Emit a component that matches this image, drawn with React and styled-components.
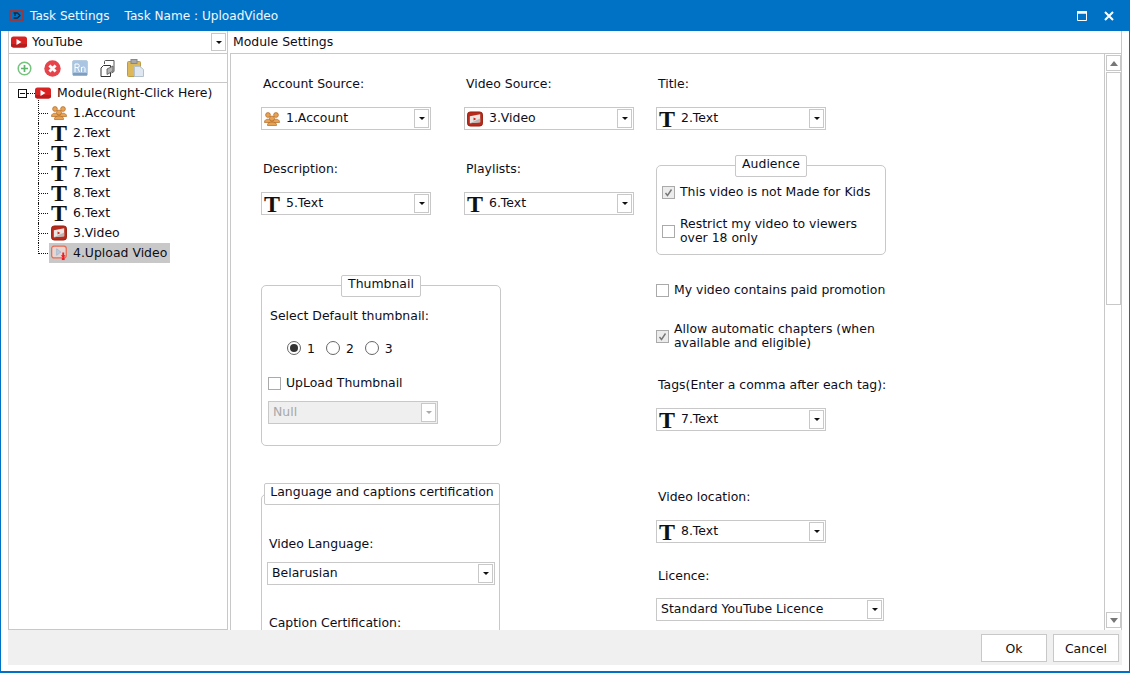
import React from 'react'
import styled, {createGlobalStyle} from 'styled-components'

const GlobalStyle = createGlobalStyle`
    html, body {
        margin: 0;
        padding: 0;
        background: #fff;
    }
    * {
        box-sizing: border-box;
    }
`

const LINE = '#c8c8c8'

const YouTubeIcon = () => (
    <svg width="16" height="12" viewBox="0 0 16 12">
        <rect x="0" y="0.5" width="16" height="11" rx="2.5" fill="#d92222"/>
        <path d="M0 8 H16 V9 C16 10.5 15 11.5 13.5 11.5 H2.5 C1 11.5 0 10.5 0 9 Z" fill="#b81c1c"/>
        <path d="M5.5 3 L10.5 6 L5.5 9 Z" fill="#fff"/>
    </svg>
)

const AccountIcon = () => (
    <svg width="16" height="14" viewBox="0 0 16 14">
        <g fill="#e8a253" stroke="#b06a24" strokeWidth="0.7">
            <circle cx="4" cy="3" r="2.4"/>
            <circle cx="12" cy="3" r="2.4"/>
            <path d="M0.5 10 C0.5 6.2 7.5 6.2 7.5 10 L7.5 10.5 L0.5 10.5 Z"/>
            <path d="M8.5 10 C8.5 6.2 15.5 6.2 15.5 10 L15.5 10.5 L8.5 10.5 Z"/>
            <circle cx="8" cy="6.5" r="2.5"/>
            <path d="M3.5 13.5 L3.5 12.5 C3.5 9.2 12.5 9.2 12.5 12.5 L12.5 13.5 Z"/>
        </g>
    </svg>
)

const VideoIcon = () => (
    <svg width="17" height="16" viewBox="0 0 17 16">
        <rect x="0.5" y="0.5" width="16" height="15" rx="3" fill="#b82a1c" stroke="#97200f"/>
        <path d="M3 5 L14 3 L14 11.5 L3 12.5 Z" fill="#eae6e4"/>
        <path d="M3 12.5 L14 7.5 L14 11.5 Z" fill="#bdb6b4"/>
        <path d="M7 6.5 L10 8 L7 9.5 Z" fill="#d02018"/>
    </svg>
)

const UploadIcon = () => (
    <svg width="17" height="16" viewBox="0 0 17 16">
        <rect x="0.7" y="0.7" width="15.5" height="12.5" rx="2.5" fill="#e6d6d2" stroke="#ec6a50" strokeWidth="1.3"/>
        <path d="M6 3.5 L10.5 7 L6 10.5 Z" fill="#b9cbe0" stroke="#8fa9c9" strokeWidth="0.6"/>
        <path d="M12 7.5 L14 7.5 L14 10.5 L15.5 10.5 L13 13.5 L10.5 10.5 L12 10.5 Z" fill="#ee1c25"/>
        <rect x="11.5" y="13" width="3" height="2.5" fill="#ee1c25"/>
    </svg>
)

const AddIcon = () => (
    <svg width="15" height="15" viewBox="0 0 15 15">
        <circle cx="7.5" cy="7.5" r="6.3" fill="#fff" stroke="#74c47e" strokeWidth="1.5"/>
        <path d="M7.5 4 V11 M4 7.5 H11" stroke="#5cb56a" strokeWidth="1.7"/>
    </svg>
)

const RemoveIcon = () => (
    <svg width="17" height="17" viewBox="0 0 17 17">
        <circle cx="8.5" cy="8.5" r="8.2" fill="#e6444a"/>
        <path d="M5.4 5.4 L11.6 11.6 M11.6 5.4 L5.4 11.6" stroke="#fff" strokeWidth="2.8"/>
    </svg>
)

const RenameIcon = () => (
    <svg width="16" height="16" viewBox="0 0 16 16">
        <rect x="0.5" y="0.5" width="15" height="15" rx="1.5" fill="#a9c5e2" stroke="#b9cde0"/>
        <rect x="1" y="13" width="14" height="2.5" fill="#7f9dbd"/>
        <path d="M3 12 V4 H6 C7.7 4 7.7 7.5 6 7.5 H3 M5.5 7.5 L7.5 12 M9.5 12 V7 M9.5 8.5 C10.5 6.5 13 6.5 13 8.5 V12" fill="none" stroke="#fff" strokeWidth="1"/>
    </svg>
)

const CopyIcon = () => (
    <svg width="15" height="17" viewBox="0 0 15 17">
        <path d="M4.5 4 V1.5 C4.5 1 5 0.5 5.5 0.5 H14 V11.5 L11.5 13" fill="#fff" stroke="#555" strokeWidth="1"/>
        <path d="M3.5 5.5 H10.5 V16.5 H1 V8 Z" fill="#fff" stroke="#333" strokeWidth="1"/>
        <path d="M7 9 L13 6 V11 L7 14.5 Z" fill="#b4b4b4" stroke="#555" strokeWidth="0.8"/>
    </svg>
)

const PasteIcon = () => (
    <svg width="17" height="18" viewBox="0 0 17 18">
        <rect x="0.5" y="2.5" width="13" height="15" rx="1" fill="#dcb85a" stroke="#bd9a48"/>
        <rect x="4" y="0.5" width="6" height="4" fill="#a8a8a8" stroke="#888"/>
        <path d="M7.5 7.5 H13 L16.5 10.5 V17.5 H7.5 Z" fill="#dfe8f0" stroke="#b4c2cf"/>
    </svg>
)

const TitleIcon = () => (
    <svg width="15" height="11" viewBox="0 0 15 11">
        <rect x="1" y="1" width="13" height="9" fill="none" stroke="#b0302a" strokeWidth="1.6"/>
        <path d="M4.5 3 L8.5 3 L11 5.5 L8.5 8 L4.5 8 M6 3 V6" fill="none" stroke="#12283f" strokeWidth="1.3"/>
    </svg>
)

const Window = styled.div`
    width: 1130px;
    height: 673px;
    display: flex;
    flex-direction: column;
    overflow: hidden;
    background: #fff;
    border: solid #0072c6;
    border-width: 0 1px 2px 1px;
    font-family: "DejaVu Sans", sans-serif;
    font-size: 12.45px;
    color: #0d0d1a;
`

const TitleBar = styled.header`
    height: 31px;
    flex: none;
    margin: 0 -1px;
    padding: 0 16px 0 9px;
    display: flex;
    align-items: center;
    font-size: 12.1px;
    background: #0072c6;
    color: #f2f7fc;
`

const TitleText = styled.span`
    margin-left: ${p => p.$gap}px;
`

const WindowButtons = styled.div`
    margin-left: auto;
    display: flex;
    align-items: center;
    gap: 17px;
`

const Main = styled.main`
    flex: none;
    height: 599px;
    margin-left: 7px;
    display: flex;
`

const Sidebar = styled.aside`
    width: 220px;
    flex: none;
    display: flex;
    flex-direction: column;
    border: 1px solid ${LINE};
    border-top: 0;
`

const ModuleSelect = styled.div`
    height: 23px;
    flex: none;
    padding: 0 1px 0 2px;
    display: flex;
    align-items: center;
    gap: 5px;
    border-bottom: 1px solid ${LINE};
`

const ArrowButton = styled.span`
    width: 15px;
    height: ${p => p.$height || 19}px;
    margin-left: auto;
    flex: none;
    display: flex;
    align-items: center;
    justify-content: center;
    background: #fff;
    border: 1px solid ${LINE};

    &::after {
        content: '';
        border: solid transparent;
        border-width: 3px 3px 0;
        border-top-color: ${p => (p.$disabled ? '#aaa' : '#111')};
    }
`

const Toolbar = styled.div`
    height: 29px;
    flex: none;
    padding-left: 1.5px;
    display: flex;
    align-items: center;
    border-bottom: 1px solid ${LINE};
`

const ToolButton = styled.span`
    width: 27.75px;
    display: flex;
    justify-content: center;
`

const Tree = styled.div`
    padding: 0 0 0 9px;
`

const RootRow = styled.div`
    height: 20px;
    display: flex;
    align-items: center;
`

const Expander = styled.span`
    width: 9px;
    height: 9px;
    flex: none;
    display: flex;
    align-items: center;
    justify-content: center;
    border: 1px solid #111;

    &::after {
        content: '';
        width: 5px;
        height: 1px;
        background: #111;
    }
`

const RootDots = styled.span`
    width: 8px;
    flex: none;
    border-top: 1px dotted #111;
`

const RaisedText = styled.span`
    margin-bottom: 2px;
    margin-left: ${p => p.$left || 0}px;
`

const TreeRow = styled.div`
    position: relative;
    height: 20px;
    margin-left: 20px;
    padding-left: 11px;
    display: flex;
    align-items: center;

    &::before {
        content: '';
        position: absolute;
        left: 0;
        top: ${p => (p.$first ? -3 : 0)}px;
        bottom: ${p => (p.$last ? 9 : 0)}px;
        border-left: 1px dotted #111;
    }

    &::after {
        content: '';
        position: absolute;
        left: 1px;
        width: 9px;
        top: 10px;
        border-top: 1px dotted #111;
    }
`

const TreeItem = styled.span`
    height: 20px;
    display: flex;
    align-items: center;
    padding: 0 3px 0 2px;
    background: ${p => (p.$selected ? LINE : 'transparent')};
`

const ItemIcon = styled.span`
    width: 16px;
    margin-right: 6px;
    flex: none;
    display: flex;
    align-items: center;
    justify-content: center;
`

const TextGlyph = styled.span`
    font-family: "Liberation Serif", serif;
    font-weight: 700;
    font-size: 24px;
    line-height: 18px;
    color: #111;
`

const Settings = styled.section`
    flex: none;
    width: 892px;
    margin-left: 2px;
    display: flex;
    flex-direction: column;
    border-right: 1px solid ${LINE};
`

const SettingsHeader = styled.div`
    height: 22px;
    flex: none;
    margin-left: 3px;
    display: flex;
    align-items: center;
`

const SettingsBody = styled.div`
    flex: 1;
    min-height: 0;
    display: flex;
    overflow: hidden;
    border-top: 1px solid ${LINE};
    border-left: 1px solid ${LINE};
`

const Canvas = styled.div`
    flex: 1;
    min-width: 0;
    padding: 22px 0 0 30px;
    display: flex;
    overflow: hidden;
`

const LeftColumn = styled.div`
    width: 395px;
    flex: none;
`

const RightColumn = styled.div`
    width: 240px;
    flex: none;
`

const FieldRow = styled.div`
    display: flex;
    gap: 33px;
    margin-bottom: ${p => p.$after || 0}px;
`

const Label = styled.div`
    height: 16px;
    line-height: 16px;
    padding-left: 2px;
    margin-top: ${p => p.$top || 0}px;
    margin-bottom: ${p => p.$bottom ?? 15}px;
    white-space: nowrap;
`

const ComboBox = styled.div`
    width: ${p => p.$width || 170}px;
    height: 23px;
    padding: 0 1px 0 ${p => (p.$plain ? 4 : 2)}px;
    display: flex;
    align-items: center;
    background: ${p => (p.$disabled ? '#efefef' : '#fff')};
    color: ${p => (p.$disabled ? '#a8a8a8' : 'inherit')};
    border: 1px solid ${LINE};
`

const Combo = ({width, icon, value, disabled}) => (
    <ComboBox $width={width} $disabled={disabled} $plain={!icon}>
        {icon && <ItemIcon>{icon}</ItemIcon>}
        <RaisedText>{value}</RaisedText>
        <ArrowButton $disabled={disabled}/>
    </ComboBox>
)

const Group = styled.div`
    position: relative;
    width: ${p => p.$width}px;
    height: ${p => p.$height}px;
    margin-top: ${p => p.$top}px;
    padding: ${p => p.$padding};
    border: 1px solid ${LINE};
    border-radius: 5px;
`

const Legend = styled.div`
    position: absolute;
    top: ${p => p.$top || -11}px;
    left: ${p => p.$left}px;
    width: ${p => p.$width}px;
    height: 22px;
    line-height: 16px;
    text-align: center;
    white-space: nowrap;
    background: #fff;
    border: 1px solid ${LINE};
    border-radius: 2px;
`

const RadioRow = styled.div`
    height: 16px;
    margin: 16px 0 0 19px;
    display: flex;
    align-items: center;
    gap: 6px;
`

const Radio = styled.span`
    width: 14px;
    height: 14px;
    flex: none;
    display: flex;
    align-items: center;
    justify-content: center;
    border: 1px solid #666;
    border-radius: 50%;
    background: #fff;
    margin-left: ${p => (p.$first ? 0 : 5)}px;

    &::after {
        content: '';
        width: 8px;
        height: 8px;
        border-radius: 50%;
        background: ${p => (p.$checked ? '#333' : 'transparent')};
    }
`

const CheckRow = styled.div`
    display: flex;
    align-items: center;
    gap: 5px;
    line-height: 14px;
    min-height: 16px;
    margin-top: ${p => p.$top || 0}px;
    margin-bottom: ${p => p.$bottom || 0}px;
`

const CheckBox = styled.span`
    width: 13px;
    height: 13px;
    flex: none;
    display: flex;
    align-items: center;
    justify-content: center;
    background: ${p => (p.$checked ? '#ececec' : '#fff')};
    border: 1px solid #aaa;
`

const Check = () => (
    <svg width="9" height="9" viewBox="0 0 9 9">
        <path d="M1.5 5 L3.5 7.5 L7.5 1.5" fill="none" stroke="#777" strokeWidth="1.4"/>
    </svg>
)

const Scrollbar = styled.div`
    width: 17px;
    flex: none;
    padding: 1px 0 2px 1px;
    display: flex;
    flex-direction: column;
    gap: 1px;
    border-left: 1px solid ${LINE};
`

const ScrollButton = styled.span`
    width: 15px;
    height: 16px;
    flex: none;
    display: flex;
    align-items: center;
    justify-content: center;
    border: 1px solid ${LINE};

    &::after {
        content: '';
        border: solid transparent;
        border-width: ${p => (p.$up ? '0 4px 5px' : '5px 4px 0')};
        border-bottom-color: ${p => (p.$up ? '#777' : 'transparent')};
        border-top-color: ${p => (p.$up ? 'transparent' : '#777')};
    }
`

const ScrollThumb = styled.span`
    width: 15px;
    height: 233px;
    flex: none;
    border: 1px solid ${LINE};
`

const ScrollSpace = styled.span`
    flex: 1;
`

const Footer = styled.footer`
    flex: none;
    width: 1114px;
    height: 35px;
    margin-left: 7px;
    padding: 4px 3px 3px 0;
    display: flex;
    justify-content: flex-end;
    gap: 6px;
    background: #f0f0f0;
`

const Button = styled.button`
    width: 66px;
    height: 28px;
    padding: 0;
    font: inherit;
    color: inherit;
    background: #fff;
    border: 1px solid ${LINE};
`

const TIcon = <TextGlyph>T</TextGlyph>

const treeItems = [
    {label: '1.Account', icon: <AccountIcon/>},
    {label: '2.Text', icon: TIcon},
    {label: '5.Text', icon: TIcon},
    {label: '7.Text', icon: TIcon},
    {label: '8.Text', icon: TIcon},
    {label: '6.Text', icon: TIcon},
    {label: '3.Video', icon: <VideoIcon/>},
    {label: '4.Upload Video', icon: <UploadIcon/>, selected: true}
]

export default function App() {
    return (
        <Window>
            <GlobalStyle/>
            <TitleBar>
                <TitleIcon/>
                <TitleText $gap={6}>Task Settings</TitleText>
                <TitleText $gap={15}>Task Name : UploadVideo</TitleText>
                <WindowButtons>
                    <svg width="10" height="10" viewBox="0 0 10 10">
                        <path d="M0.5 2 H9.5 V9.5 H0.5 Z" fill="none" stroke="#fff"/>
                        <rect width="10" height="2.5" fill="#fff"/>
                    </svg>
                    <svg width="10" height="10" viewBox="0 0 10 10">
                        <path d="M1 1 L9 9 M9 1 L1 9" stroke="#fff" strokeWidth="2"/>
                    </svg>
                </WindowButtons>
            </TitleBar>

            <Main>
                <Sidebar>
                    <ModuleSelect>
                        <YouTubeIcon/>
                        <RaisedText>YouTube</RaisedText>
                        <ArrowButton $height={18}/>
                    </ModuleSelect>
                    <Toolbar>
                        <ToolButton><AddIcon/></ToolButton>
                        <ToolButton><RemoveIcon/></ToolButton>
                        <ToolButton><RenameIcon/></ToolButton>
                        <ToolButton><CopyIcon/></ToolButton>
                        <ToolButton><PasteIcon/></ToolButton>
                    </Toolbar>
                    <Tree>
                        <RootRow>
                            <Expander/>
                            <RootDots/>
                            <YouTubeIcon/>
                            <RaisedText $left={6}>Module(Right-Click Here)</RaisedText>
                        </RootRow>
                        {treeItems.map((item, i) => (
                            <TreeRow key={item.label} $first={i === 0} $last={i === treeItems.length - 1}>
                                <TreeItem $selected={item.selected}>
                                    <ItemIcon>{item.icon}</ItemIcon>
                                    <RaisedText>{item.label}</RaisedText>
                                </TreeItem>
                            </TreeRow>
                        ))}
                    </Tree>
                </Sidebar>

                <Settings>
                    <SettingsHeader><RaisedText>Module Settings</RaisedText></SettingsHeader>
                    <SettingsBody>
                        <Canvas>
                            <LeftColumn>
                                <FieldRow $after={31}>
                                    <div>
                                        <Label>Account Source:</Label>
                                        <Combo icon={<AccountIcon/>} value="1.Account"/>
                                    </div>
                                    <div>
                                        <Label>Video Source:</Label>
                                        <Combo icon={<VideoIcon/>} value="3.Video"/>
                                    </div>
                                </FieldRow>
                                <FieldRow>
                                    <div>
                                        <Label>Description:</Label>
                                        <Combo icon={TIcon} value="5.Text"/>
                                    </div>
                                    <div>
                                        <Label>Playlists:</Label>
                                        <Combo icon={TIcon} value="6.Text"/>
                                    </div>
                                </FieldRow>

                                <Group $width={240} $height={161} $top={70} $padding="22px 0 0 6px">
                                    <Legend $left={79} $width={80}>Thumbnail</Legend>
                                    <Label $bottom={0}>Select Default thumbnail:</Label>
                                    <RadioRow>
                                        <Radio $first $checked/>1
                                        <Radio/>2
                                        <Radio/>3
                                    </RadioRow>
                                    <CheckRow $top={19} $bottom={10}>
                                        <CheckBox/>
                                        UpLoad Thumbnail
                                    </CheckRow>
                                    <Combo value="Null" disabled/>
                                </Group>

                                <Group $width={239} $height={300} $top={48} $padding="41px 0 0 5px">
                                    <Legend $top={-12} $left={2} $width={236}>Language and captions certification</Legend>
                                    <Label $bottom={10}>Video Language:</Label>
                                    <Combo width={228} value="Belarusian"/>
                                    <Label $top={30}>Caption Certification:</Label>
                                </Group>
                            </LeftColumn>

                            <RightColumn>
                                <Label>Title:</Label>
                                <Combo icon={TIcon} value="2.Text"/>

                                <Group $width={230} $height={90} $top={35} $padding="18px 0 0 5px">
                                    <Legend $left={78} $width={72}>Audience</Legend>
                                    <CheckRow $bottom={17}>
                                        <CheckBox $checked><Check/></CheckBox>
                                        This video is not Made for Kids
                                    </CheckRow>
                                    <CheckRow>
                                        <CheckBox/>
                                        <span>Restrict my video to viewers<br/>over 18 only</span>
                                    </CheckRow>
                                </Group>

                                <CheckRow $top={27}>
                                    <CheckBox/>
                                    My video contains paid promotion
                                </CheckRow>
                                <CheckRow $top={24}>
                                    <CheckBox $checked><Check/></CheckBox>
                                    <span>Allow automatic chapters (when<br/>available and eligible)</span>
                                </CheckRow>

                                <Label $top={27}>Tags(Enter a comma after each tag):</Label>
                                <Combo icon={TIcon} value="7.Text"/>

                                <Label $top={58}>Video location:</Label>
                                <Combo icon={TIcon} value="8.Text"/>

                                <Label $top={25} $bottom={14}>Licence:</Label>
                                <Combo width={228} value="Standard YouTube Licence"/>
                            </RightColumn>
                        </Canvas>
                        <Scrollbar>
                            <ScrollButton $up/>
                            <ScrollThumb/>
                            <ScrollSpace/>
                            <ScrollButton/>
                        </Scrollbar>
                    </SettingsBody>
                </Settings>
            </Main>

            <Footer>
                <Button>Ok</Button>
                <Button>Cancel</Button>
            </Footer>
        </Window>
    )
}
